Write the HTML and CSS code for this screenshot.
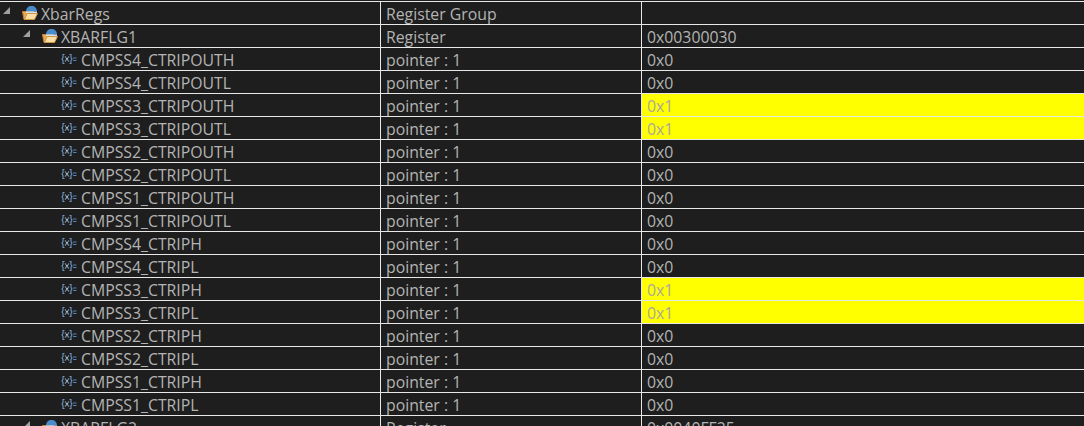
FILE: index.html
```html
<!DOCTYPE html>
<html lang="en">
<head>
    <meta charset="UTF-8">
    <meta name="viewport" content="width=device-width, initial-scale=1.0">
    <title>Registers</title>
    <link rel="stylesheet" href="styles.css">
</head>
<body>
    <svg class="defs" width="0" height="0">
        <symbol id="group" viewBox="0 0 16 16">
            <path d="M.5 6.500h4l1-1.500h6v9.500H2z" fill="#e9a94f" stroke="#c4863a"/>
            <path d="M4 6.500C4 3 6.500 1 9.500 1S15 3 15 6.500z" fill="#4a8ccb"/>
            <path d="M4 6.500h11V8H4z" fill="#cfe2f3"/>
            <path d="M5 8.500h10.500l-3 6H2.500z" fill="#fbdfa8" stroke="#d2933f"/>
        </symbol>
        <symbol id="field" viewBox="0 0 16 12">
            <path d="M3.500 1.500H2v3L1 6l1 1.500v3h1.500M8.500 1.500H10v3L11 6l-1 1.500v3H8.500" fill="none" stroke="#6f98c6" stroke-width="1.100"/>
            <path d="M4 3.500l4 5M8 3.500l-4 5" stroke="#a5bfda" stroke-width="1.100" stroke-dasharray="1.300 .5"/>
            <path d="M12 5h3.500M12 7.500h3.500" stroke="#4f86bb"/>
        </symbol>
    </svg>

    <div class="tree">
        <div class="row">
            <div class="cell name">
                <span class="twisty"></span>
                <svg class="icon-group"><use href="#group"/></svg>
                XbarRegs
            </div>
            <div class="cell">Register Group</div>
            <div class="cell"></div>
        </div>
        <div class="row">
            <div class="cell name level-1">
                <span class="twisty"></span>
                <svg class="icon-group"><use href="#group"/></svg>
                XBARFLG1
            </div>
            <div class="cell">Register</div>
            <div class="cell">0x00300030</div>
        </div>
        <div class="row">
            <div class="cell name level-2"><svg class="icon-field"><use href="#field"/></svg>CMPSS4_CTRIPOUTH</div>
            <div class="cell">pointer : 1</div>
            <div class="cell">0x0</div>
        </div>
        <div class="row">
            <div class="cell name level-2"><svg class="icon-field"><use href="#field"/></svg>CMPSS4_CTRIPOUTL</div>
            <div class="cell">pointer : 1</div>
            <div class="cell">0x0</div>
        </div>
        <div class="row">
            <div class="cell name level-2"><svg class="icon-field"><use href="#field"/></svg>CMPSS3_CTRIPOUTH</div>
            <div class="cell">pointer : 1</div>
            <div class="cell changed">0x1</div>
        </div>
        <div class="row">
            <div class="cell name level-2"><svg class="icon-field"><use href="#field"/></svg>CMPSS3_CTRIPOUTL</div>
            <div class="cell">pointer : 1</div>
            <div class="cell changed">0x1</div>
        </div>
        <div class="row">
            <div class="cell name level-2"><svg class="icon-field"><use href="#field"/></svg>CMPSS2_CTRIPOUTH</div>
            <div class="cell">pointer : 1</div>
            <div class="cell">0x0</div>
        </div>
        <div class="row">
            <div class="cell name level-2"><svg class="icon-field"><use href="#field"/></svg>CMPSS2_CTRIPOUTL</div>
            <div class="cell">pointer : 1</div>
            <div class="cell">0x0</div>
        </div>
        <div class="row">
            <div class="cell name level-2"><svg class="icon-field"><use href="#field"/></svg>CMPSS1_CTRIPOUTH</div>
            <div class="cell">pointer : 1</div>
            <div class="cell">0x0</div>
        </div>
        <div class="row">
            <div class="cell name level-2"><svg class="icon-field"><use href="#field"/></svg>CMPSS1_CTRIPOUTL</div>
            <div class="cell">pointer : 1</div>
            <div class="cell">0x0</div>
        </div>
        <div class="row">
            <div class="cell name level-2"><svg class="icon-field"><use href="#field"/></svg>CMPSS4_CTRIPH</div>
            <div class="cell">pointer : 1</div>
            <div class="cell">0x0</div>
        </div>
        <div class="row">
            <div class="cell name level-2"><svg class="icon-field"><use href="#field"/></svg>CMPSS4_CTRIPL</div>
            <div class="cell">pointer : 1</div>
            <div class="cell">0x0</div>
        </div>
        <div class="row">
            <div class="cell name level-2"><svg class="icon-field"><use href="#field"/></svg>CMPSS3_CTRIPH</div>
            <div class="cell">pointer : 1</div>
            <div class="cell changed">0x1</div>
        </div>
        <div class="row">
            <div class="cell name level-2"><svg class="icon-field"><use href="#field"/></svg>CMPSS3_CTRIPL</div>
            <div class="cell">pointer : 1</div>
            <div class="cell changed">0x1</div>
        </div>
        <div class="row">
            <div class="cell name level-2"><svg class="icon-field"><use href="#field"/></svg>CMPSS2_CTRIPH</div>
            <div class="cell">pointer : 1</div>
            <div class="cell">0x0</div>
        </div>
        <div class="row">
            <div class="cell name level-2"><svg class="icon-field"><use href="#field"/></svg>CMPSS2_CTRIPL</div>
            <div class="cell">pointer : 1</div>
            <div class="cell">0x0</div>
        </div>
        <div class="row">
            <div class="cell name level-2"><svg class="icon-field"><use href="#field"/></svg>CMPSS1_CTRIPH</div>
            <div class="cell">pointer : 1</div>
            <div class="cell">0x0</div>
        </div>
        <div class="row">
            <div class="cell name level-2"><svg class="icon-field"><use href="#field"/></svg>CMPSS1_CTRIPL</div>
            <div class="cell">pointer : 1</div>
            <div class="cell">0x0</div>
        </div>
        <div class="row">
            <div class="cell name level-1">
                <span class="twisty"></span>
                <svg class="icon-group"><use href="#group"/></svg>
                XBARFLG2
            </div>
            <div class="cell">Register</div>
            <div class="cell">0x0040FF25</div>
        </div>
    </div>
</body>
</html>
```

FILE: styles.css
```css
html, body {
    height: 100%;
}
body {
    margin: 0;
    background: #1e1e1e;
    color: #b4b4b4;
    font-family: "Open Sans", "Noto Sans", sans-serif;
    font-size: 15.8px;
    overflow: hidden;
}
.defs {
    display: block;
}
.tree {
    padding-top: 1px;
}
.row {
    display: grid;
    grid-template-columns: 380px 261px 1fr;
    height: 23px;
    box-sizing: border-box;
    border-top: 1px solid #e8e8e8;
}
.cell {
    display: flex;
    align-items: center;
    padding-left: 5px;
    padding-top: 1px;
    border-left: 1px solid #e8e8e8;
    white-space: nowrap;
    overflow: hidden;
}
.name {
    border-left: none;
    padding-left: 3px;
}
.level-1 {
    padding-left: 23px;
}
.level-2 {
    padding-left: 61px;
}
.changed {
    background: #ffff00;
    color: #a8a8a0;
}
.twisty {
    width: 0;
    height: 0;
    border-left: 7px solid transparent;
    border-bottom: 7px solid #a0a0a0;
    margin-bottom: 7px;
    margin-right: 12px;
}
.icon-group {
    width: 16px;
    height: 16px;
    margin-right: 3px;
    margin-bottom: 2px;
}
.icon-field {
    width: 16px;
    height: 12px;
    margin-right: 4px;
    margin-bottom: 2px;
}
```
